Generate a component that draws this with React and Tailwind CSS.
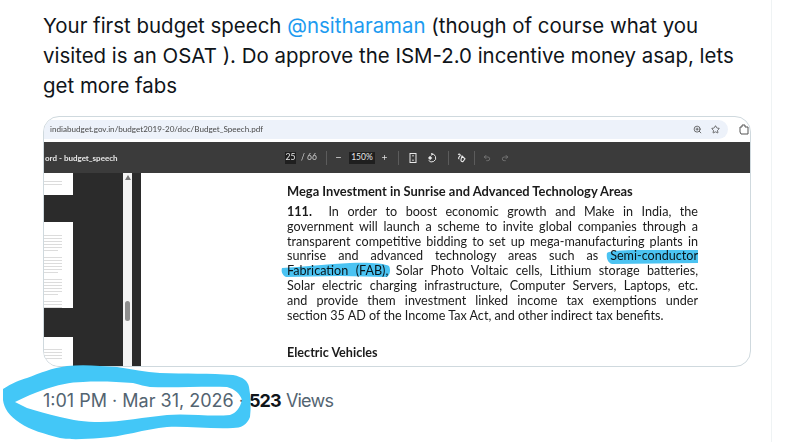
import React from 'react';
import { ZoomIn, Star, Undo2, Redo2, Minus, Plus } from 'lucide-react';

const pdfLines = [
  <><b className="mr-2">111.</b> In order to boost economic growth and Make in India, the</>,
  'government will launch a scheme to invite global companies through a',
  'transparent competitive bidding to set up mega-manufacturing plants in',
  'sunrise and advanced technology areas such as Semi-conductor',
  'Fabrication (FAB), Solar Photo Voltaic cells, Lithium storage batteries,',
  'Solar electric charging infrastructure, Computer Servers, Laptops, etc.',
  'and provide them investment linked income tax exemptions under',
];

const ThumbLines = ({ count, className }) => (
  <div className={`flex flex-col gap-[2px] pr-[11px] ${className}`}>
    {Array.from({ length: count }).map((_, i) => (
      <div key={i} className={`h-px bg-[#dcdcdc] ${i % 6 === 5 ? 'mb-[4px] w-3/4' : 'w-full'}`} />
    ))}
  </div>
);

const Sep = ({ className }) => <div className={`h-[14px] w-px bg-[#5c5c5c] ${className}`} />;

// pdf viewer toolbar glyphs, lucide has nothing close to these
const FitIcon = () => (
  <svg className="ml-[9px]" width="10" height="10" viewBox="0 0 10 10" fill="none" stroke="currentColor">
    <rect x="2" y="0.5" width="6" height="9" />
    <path d="M4 3.2 L5 2.4 L6 3.2 M4 6.8 L5 7.6 L6 6.8" strokeWidth="0.8" />
  </svg>
);

const RotateIcon = () => (
  <svg className="ml-[9px]" width="10" height="10" viewBox="0 0 10 10" fill="none" stroke="currentColor">
    <path d="M4 1 A4 4 0 1 1 1.6 7.4" />
    <path d="M4 0 L6 1.2 L4 2.4" strokeWidth="0.8" />
    <rect x="1.6" y="3.4" width="3" height="3" transform="rotate(45 3.1 4.9)" fill="currentColor" stroke="none" />
  </svg>
);

const AnnotateIcon = () => (
  <svg className="ml-[8px]" width="9" height="10" viewBox="0 0 9 10" fill="none" stroke="currentColor" strokeWidth="1.1">
    <path d="M1 1.5 C3 0.5 4 2 2.6 3.4 C1.6 4.6 1 6 2.4 6" />
    <path d="M5 3 L8 5.8 L6 8.6 C4.6 8.8 3.6 7.8 4 6.6 Z" />
  </svg>
);

const ExtensionIcon = () => (
  <svg className="ml-[11px]" width="10" height="11" viewBox="0 0 10 11" fill="none" stroke="#555">
    <path d="M1 3 H3 V1 H6 V3 H9 V10 H2 L1 8 Z" />
  </svg>
);

export default function App() {
  return (
    <div className="relative h-[442px] w-[796px] overflow-hidden bg-white text-[#0f1419] [font-family:'Inter',sans-serif]">
      <div className="h-full w-[772px] border-r border-[#eff3f4] pt-[11px] pl-[43px]">
        <p className="w-[720px] text-[20.45px] leading-[30px]">
          Your first budget speech <span className="text-[#1d9bf0]">@nsitharaman</span> (though of course what you
          <br />
          visited is an OSAT ). Do approve the ISM-2.0 incentive money asap, lets
          <br />
          get more fabs
        </p>

        {/* attached screenshot */}
        <div className="mt-[15px] h-[251px] w-[708px] overflow-hidden rounded-[16px] border border-[#cfd9de] bg-white">
          <div className="blur-[0.3px]">
            <div className="flex h-[25px] items-center">
              <div className="flex h-[19px] w-[684px] items-center justify-between rounded-r-[10px] bg-[#edf2fa] pl-[6px] pr-[8px]">
                <span className="text-[8.1px] text-[#4a4a4a] [font-family:'Lato',sans-serif]">indiabudget.gov.in/budget2019-20/doc/Budget_Speech.pdf</span>
                <div className="flex items-center gap-[9px] text-[#444]">
                  <ZoomIn size={9} />
                  <Star size={9} />
                </div>
              </div>
              <ExtensionIcon />
            </div>

            <div className="flex h-[31px] items-center bg-[#3b3b3b] text-[8.5px] text-[#e8e8e8] [font-family:'Lato',sans-serif]">
              <span className="w-[241px] shrink-0 overflow-hidden pl-[1px] text-[8px] font-bold whitespace-nowrap">ord - budget_speech</span>
              <span className="flex h-[12px] w-[11px] items-center justify-center bg-[#1f1f1f]">25</span>
              <span className="ml-[5px] w-[25px] text-[#cfcfcf]">/ 66</span>
              <Sep />
              <Minus size={7} className="ml-[8px]" strokeWidth={2.5} />
              <span className="ml-[7px] flex h-[12px] w-[26px] items-center justify-center bg-[#1f1f1f]">150%</span>
              <Plus size={7} className="ml-[6px]" strokeWidth={2.5} />
              <Sep className="ml-[10px]" />
              <FitIcon />
              <RotateIcon />
              <Sep className="ml-[11px]" />
              <AnnotateIcon />
              <Sep className="ml-[8px]" />
              <Undo2 size={8} className="ml-[8px] text-[#8a8a8a]" />
              <Redo2 size={8} className="ml-[10px] text-[#8a8a8a]" />
            </div>

            <div className="flex h-[193px]">
              <div className="flex w-[79px] flex-col bg-[#2b2b2b]">
                <div className="h-[22px] w-[29px] overflow-hidden bg-white"><ThumbLines count={2} className="pt-[8px]" /></div>
                <div className="mt-[27px] h-[87px] w-[29px] overflow-hidden bg-white"><ThumbLines count={24} className="pt-[13px]" /></div>
                <div className="mt-[29px] h-[29px] w-[29px] overflow-hidden bg-white"><ThumbLines count={4} className="pt-[12px]" /></div>
              </div>
              <div className="flex w-[9px] flex-col items-center bg-[#f4f4f4] pt-[2px]">
                <div className="h-0 w-0 border-x-[3px] border-b-[5px] border-x-transparent border-b-[#777]" />
                <div className="mt-[121px] h-[20px] w-[5px] rounded-[3px] bg-[#8e8e8e]" />
              </div>
              <div className="w-[9px] bg-[#2b2b2b]" />
              <div className="flex-1 pt-[11px] pl-[146px] text-[12.6px] leading-[14.86px] text-[#1a1a1a] [font-family:'Lato',sans-serif]">
                <div className="mb-[6px] text-[12.9px] font-bold">Mega Investment in Sunrise and Advanced Technology Areas</div>
                <div className="w-[411px]">
                  {pdfLines.map((line, i) => (
                    <div key={i} className="whitespace-nowrap text-justify [text-align-last:justify]">{line}</div>
                  ))}
                  <div>section 35 AD of the Income Tax Act, and other indirect tax benefits.</div>
                </div>
                <div className="mt-[22px] font-bold">Electric Vehicles</div>
              </div>
            </div>
          </div>
        </div>

        <div className="mt-[23px] flex text-[18px] leading-[22px] text-[#536471]">
          <span>1:01 PM · Mar 31, 2026</span>
          <span className="ml-[5px]">·</span>
          <b className="ml-[5px] tracking-[-0.8px] text-[#0f1419]">523</b>
          <span className="ml-[5px] tracking-[-0.8px]">Views</span>
        </div>
      </div>

      {/* marker pen scribbles over the page */}
      <svg className="pointer-events-none absolute top-0 left-0 mix-blend-multiply" width="796" height="442" viewBox="0 0 796 442">
        <path
          fill="#4bc3f2"
          d="M607 253 C609 251 620 250 640 250 L698 250 L698 263 L612 264 C608 263 606 258 607 253 Z M282 268 C300 267 330 264 350 263 C365 262 385 263 389 266 C391 270 390 275 387 277 L340 276 L286 277 C282 275 281 271 282 268 Z"
        />
      </svg>
      <svg className="pointer-events-none absolute top-0 left-0" width="796" height="442" viewBox="0 0 796 442">
        <path
          fill="#43c7f7"
          fillRule="evenodd"
          d="M3 389 C12 383 20 380 27 378 C40 373 52 368 67 366 C85 364 100 366 117 367 C132 369 145 372 160 373 C185 374 210 373 233 375 C243 377 248 381 249 387 C251 397 251 408 250 417 C247 425 241 428 233 428 C210 429 187 426 167 427 C145 429 122 437 100 438 C85 439 72 440 60 438 C45 434 30 430 20 423 C9 416 4 408 3 400 Z M15 402 C25 397 34 393 43 390 C57 385 70 382 83 382 C100 381 118 382 133 383 C140 385 145 386 150 387 C175 388 205 386 227 387 C235 389 240 394 242 400 C240 408 236 413 230 415 C210 417 187 413 167 415 C145 417 122 422 100 422 C85 422 72 420 60 417 C47 414 37 411 27 408 Z"
        />
      </svg>
    </div>
  );
}
